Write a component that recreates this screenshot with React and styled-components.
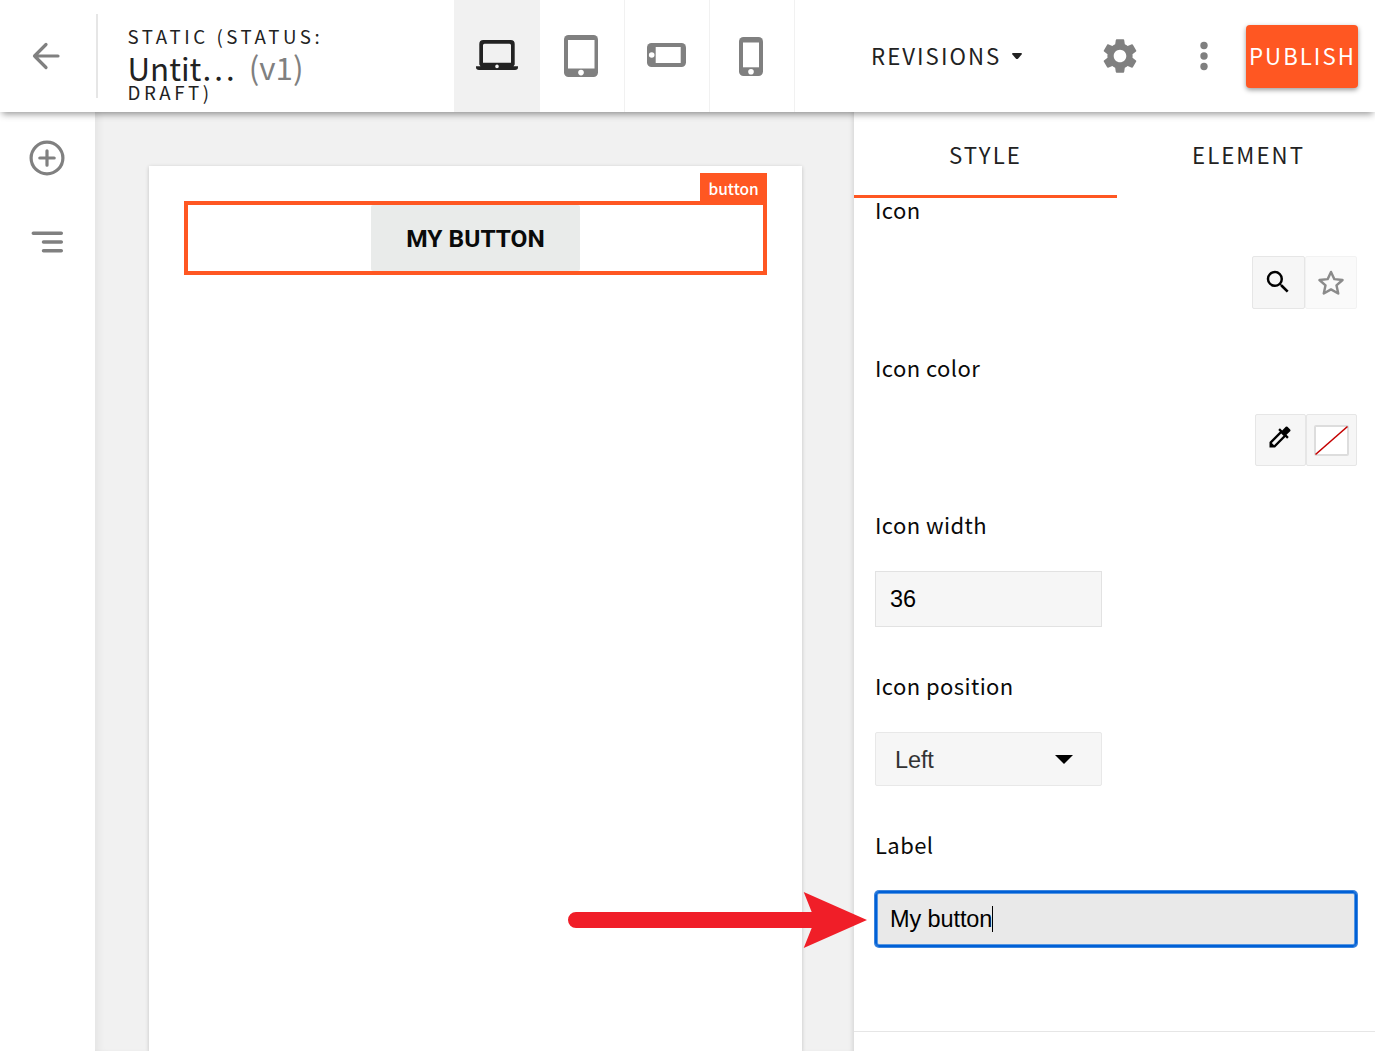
import React from "react";
import styled, { createGlobalStyle } from "styled-components";
import { MdSettings, MdSearch, MdColorize } from "react-icons/md";

const GlobalStyle = createGlobalStyle`
  *, *::before, *::after { box-sizing: border-box; }
  body { margin: 0; background: #fff; overflow: hidden; }
  svg { display: block; flex: none; }
`;

const sans = `"Noto Sans CJK SC", "Open Sans", sans-serif`;
const arial = `"Liberation Sans", Arial, sans-serif`;
const orange = "#ff5722";

const Shell = styled.div`
  position: relative;
  display: flex;
  flex-direction: column;
  width: 1375px;
  height: 1051px;
  overflow: hidden;
  font-family: ${sans};
  color: #222;
`;

const Header = styled.header`
  position: relative;
  z-index: 2;
  display: flex;
  flex: none;
  height: 112px;
  background: #fff;
  box-shadow: 0 4px 7px -2px rgba(0, 0, 0, 0.42);
`;

const BackCell = styled.div`
  display: flex;
  align-items: center;
  width: 98px;
  height: 84px;
  margin-top: 14px;
  padding-left: 30px;
  border-right: 2px solid #e6e6e6;
`;

const TitleCell = styled.div`
  display: flex;
  flex-direction: column;
  width: 356px;
  padding: 24px 0 0 29.5px;
`;

const Status = styled.div`
  font-size: 18.7px;
  line-height: 24px;
  letter-spacing: 3.55px;
  white-space: nowrap;
`;

const Title = styled.div`
  display: flex;
  gap: 14px;
  font-size: 31.3px;
  line-height: 32px;
  padding-top: 4px;
  height: 32px;
  white-space: nowrap;
`;

const Version = styled.span`
  margin-top: -1px;
  color: #808080;
`;

const Devices = styled.div`
  display: flex;
`;

const Device = styled.button`
  display: flex;
  align-items: center;
  justify-content: center;
  width: ${(p) => (p.$active ? 86 : 85)}px;
  padding: 0 ${(p) => p.$inset || 0}px ${(p) => p.$lift || 0}px 0;
  border: 0;
  border-right: 1px solid #f1f1f1;
  background: ${(p) => (p.$active ? "#f1f1f1" : "#fff")};
  color: ${(p) => (p.$active ? "#222" : "#808080")};
`;

const Actions = styled.div`
  display: flex;
  flex: 1;
  align-items: center;
  padding-left: 76px;
`;

const Caps = styled.span`
  font-size: 22.2px;
  line-height: 30px;
  letter-spacing: 2.05px;
  white-space: nowrap;
  margin-top: -3px;
`;

const Revisions = styled.div`
  display: flex;
  align-items: center;
  gap: 10px;
  width: 228px;
`;

const GearWrap = styled.div`
  width: 101px;
  color: #808080;
`;

const DotsWrap = styled.div`
  width: 46px;
`;

const Publish = styled.button`
  display: flex;
  flex: none;
  align-items: center;
  width: 112px;
  height: 63px;
  padding: 0 0 0 3px;
  border: 0;
  border-radius: 4px;
  background: ${orange};
  color: #fff;
  font-family: ${sans};
  box-shadow: 0 2px 5px rgba(0, 0, 0, 0.4);
`;

const Body = styled.div`
  display: flex;
  flex: 1;
  min-height: 0;
`;

const Rail = styled.nav`
  display: flex;
  flex: none;
  flex-direction: column;
  gap: 44px;
  width: 95px;
  padding: 26px 0 0 27px;
  background: #fff;
`;

const Canvas = styled.main`
  flex: none;
  width: 759px;
  padding: 54px 0 0 54px;
  background: #f1f1f1;
  box-shadow: inset 9px 0 9px -6px rgba(0, 0, 0, 0.06), inset -4px 0 5px -3px rgba(0, 0, 0, 0.13);
`;

const Page = styled.div`
  width: 653px;
  height: 100%;
  padding: 35px;
  background: #fff;
  box-shadow: 0 1px 4px rgba(0, 0, 0, 0.2);
`;

const Selection = styled.div`
  position: relative;
  display: flex;
  justify-content: center;
  height: 74px;
  border: 4px solid ${orange};
`;

const Tag = styled.div`
  position: absolute;
  right: -4px;
  top: -32px;
  width: 67px;
  height: 28px;
  padding-left: 8.5px;
  background: ${orange};
  color: #fff;
  font-size: 15.5px;
  font-weight: 500;
  line-height: 30px;
`;

const CanvasButton = styled.div`
  display: flex;
  align-items: center;
  justify-content: center;
  width: 209px;
  border-radius: 2px;
  background: #e9ebea;
  color: #0a0a0a;
  font-family: Roboto, sans-serif;
  font-size: 24.5px;
  font-weight: 700;
`;

const Panel = styled.aside`
  display: flex;
  flex: 1;
  flex-direction: column;
  min-width: 0;
  overflow: hidden;
  background: #fff;
`;

const Tabs = styled.div`
  display: grid;
  grid-template-columns: 263px 263px;
  flex: none;
  height: 86px;
`;

const Tab = styled.div`
  display: flex;
  align-items: center;
  justify-content: center;
  border-bottom: 3px solid ${(p) => (p.$active ? orange : "transparent")};
  padding-top: 4px;
`;

const Fields = styled.div`
  display: flex;
  flex-direction: column;
  gap: 47px;
  padding: 0 18px 84px 21px;
  border-bottom: 1px solid #e6e6e6;
`;

const Field = styled.div`
  display: flex;
  flex-direction: column;
`;

const Label = styled.div`
  height: 26px;
  margin-bottom: 32px;
  color: #0a0a0a;
  font-size: 22px;
  line-height: 23px;
  letter-spacing: 0.42px;
`;

const ButtonPair = styled.div`
  display: flex;
  align-self: flex-end;
`;

const Square = styled.button`
  display: flex;
  align-items: center;
  justify-content: center;
  width: ${(p) => p.$w}px;
  height: ${(p) => p.$h}px;
  padding: 0 ${(p) => (p.$lift ? 1 : 0)}px ${(p) => p.$lift || 0}px 0;
  border: 1px solid #e6e6e6;
  border-radius: 2px;
  background: #f6f6f6;
  color: #000;
  opacity: ${(p) => (p.$dim ? 0.5 : 1)};
`;

const Swatch = styled.span`
  display: block;
  width: 35px;
  height: 31px;
  border: 2px solid #ddd;
  border-radius: 2px;
  background: #fff;

  svg { overflow: visible; }
`;

const Input = styled.div`
  display: flex;
  align-items: center;
  width: ${(p) => (p.$focused ? "auto" : "227px")};
  height: 56px;
  padding-left: 14px;
  border: 1px solid #e2e2e2;
  background: ${(p) => (p.$focused ? "#e9e9e9" : "#f6f6f6")};
  color: #000;
  font-family: ${arial};
  font-size: 23.5px;
  letter-spacing: -0.1px;
  ${(p) =>
    p.$focused &&
    "border-color: #0060d6; border-radius: 4px; box-shadow: inset 0 0 0 1px #0060d6, inset 0 0 0 2px #5596e2, 0 0 0 1px #3c85dd;"}
`;

const Caret = styled.span`
  width: 1px;
  height: 26px;
  background: #000;
`;

const Select = styled.div`
  display: flex;
  align-items: center;
  justify-content: space-between;
  width: 227px;
  height: 54px;
  padding: 2px 28px 0 19px;
  border: 1px solid #e8e8e8;
  border-radius: 2px;
  background: #f6f6f6;
  color: #333;
  font-family: ${arial};
  font-size: 23.5px;
  letter-spacing: -0.1px;
`;

const Pointer = styled.svg`
  position: absolute;
  z-index: 3;
  left: 567px;
  top: 890px;
`;

const BackIcon = () => (
  <svg width="32" height="32" fill="none" stroke="#808080" strokeWidth="3.2" strokeLinecap="round" strokeLinejoin="round">
    <path d="M28 16H4.500M16 4.500 4.500 16 16 27.500" />
  </svg>
);

const LaptopIcon = () => (
  <svg width="42" height="30" fill="currentColor" fillRule="evenodd">
    <path d="M7.300 0h27.400a4 4 0 0 1 4 4v20.500l-1.200 1.800H42v1c0 1.700-1 2.700-3 2.700H3c-2 0-3-1-3-2.700v-1h4.500L3.300 24.500V4a4 4 0 0 1 4-4ZM8.500 3.800A1.500 1.500 0 0 0 7 5.300V22.700h28V5.300a1.500 1.500 0 0 0-1.500-1.500ZM21 24.600a1.800 1.800 0 1 0 0 3.600 1.800 1.800 0 0 0 0-3.600Z" />
  </svg>
);

const SlateIcon = ({ w, h, screen, home }) => (
  <svg width={w} height={h}>
    <rect width={w} height={h} rx="4.500" fill="currentColor" />
    <rect x={screen[0]} y={screen[1]} width={screen[2]} height={screen[3]} fill="#fff" />
    <circle cx={home[0]} cy={home[1]} r="2.8" fill="#fff" />
  </svg>
);

const PlusIcon = () => (
  <svg width="40" height="40" fill="none" stroke="#808080" strokeWidth="3.2" strokeLinecap="round">
    <circle cx="20" cy="20" r="15.9" />
    <path d="M12.800 20h14.400M20 12.800v14.400" />
  </svg>
);

const LayersIcon = () => (
  <svg width="40" height="40" fill="none" stroke="#808080" strokeWidth="3.5" strokeLinecap="round">
    <path d="M6.300 11.300h28M16.500 20h17.800M16.500 28.700h17.800" />
  </svg>
);

export default function App() {
  return (
    <Shell>
      <GlobalStyle />
      <Header>
        <BackCell><BackIcon /></BackCell>
        <TitleCell>
          <Status>STATIC (STATUS:</Status>
          <Title><span>Untit…</span><Version>(v1)</Version></Title>
          <Status>DRAFT)</Status>
        </TitleCell>
        <Devices>
          <Device $active $lift={2}><LaptopIcon /></Device>
          <Device $inset={1.5}><SlateIcon w={34} h={42} screen={[4, 5, 26.5, 28.5]} home={[17, 37.6]} /></Device>
          <Device $inset={1} $lift={2}><SlateIcon w={39} h={24} screen={[8.7, 4, 25, 16]} home={[4.7, 12]} /></Device>
          <Device $inset={2}><SlateIcon w={24} h={39} screen={[4, 5.5, 16, 24.8]} home={[12, 34.7]} /></Device>
        </Devices>
        <Actions>
          <Revisions>
            <Caps>REVISIONS</Caps>
            <svg width="12" height="8"><path d="M2 1h8q1.500.3.600 1.500L7.200 6.600q-1.200 1-2.400 0L1.400 2.500Q.5 1.300 2 1Z" fill="#222" /></svg>
          </Revisions>
          <GearWrap><MdSettings size={42} /></GearWrap>
          <DotsWrap>
            <svg width="8" height="30" fill="#808080">
              <circle cx="4" cy="4.5" r="3.7" /><circle cx="4" cy="15" r="3.7" /><circle cx="4" cy="25.5" r="3.7" />
            </svg>
          </DotsWrap>
          <Publish><Caps>PUBLISH</Caps></Publish>
        </Actions>
      </Header>
      <Body>
        <Rail><PlusIcon /><LayersIcon /></Rail>
        <Canvas>
          <Page>
            <Selection>
              <Tag>button</Tag>
              <CanvasButton>MY BUTTON</CanvasButton>
            </Selection>
          </Page>
        </Canvas>
        <Panel>
          <Tabs>
            <Tab $active><Caps>STYLE</Caps></Tab>
            <Tab><Caps>ELEMENT</Caps></Tab>
          </Tabs>
          <Fields>
            <Field>
              <Label>Icon</Label>
              <ButtonPair>
                <Square $w={53} $h={53} $lift={2}><MdSearch size={30} /></Square>
                <Square $w={52} $h={53} $dim>
                  <svg width="28" height="28" viewBox="0 0 24 24" fill="none" stroke="#1a1a1a" strokeWidth="2.1" strokeLinejoin="round">
                    <path d="m12 2.500 2.900 6.200 7 .7-5.200 4.600 1.500 7L12 17.500 5.800 21l1.500-7L2.100 9.400l7-.7Z" />
                  </svg>
                </Square>
              </ButtonPair>
            </Field>
            <Field>
              <Label>Icon color</Label>
              <ButtonPair>
                <Square $w={51} $h={52} $lift={6}><MdColorize size={28} /></Square>
                <Square $w={51} $h={52}>
                  <Swatch><svg width="31" height="27"><path d="M-.5 27.500 31.500-.5" stroke="#c40000" strokeWidth="1.6" /></svg></Swatch>
                </Square>
              </ButtonPair>
            </Field>
            <Field>
              <Label>Icon width</Label>
              <Input>36</Input>
            </Field>
            <Field>
              <Label>Icon position</Label>
              <Select>
                Left
                <svg width="18" height="10"><path d="M0 0h18l-9 9Z" fill="#000" /></svg>
              </Select>
            </Field>
            <Field>
              <Label>Label</Label>
              <Input $focused>My button<Caret /></Input>
            </Field>
          </Fields>
        </Panel>
      </Body>
      <Pointer width="302" height="60" fill="#f01e28">
        <path d="M9 22h235.700L236.700 2 300 30 236.700 58l8-20H9a8 8 0 0 1 0-16Z" />
      </Pointer>
    </Shell>
  );
}
